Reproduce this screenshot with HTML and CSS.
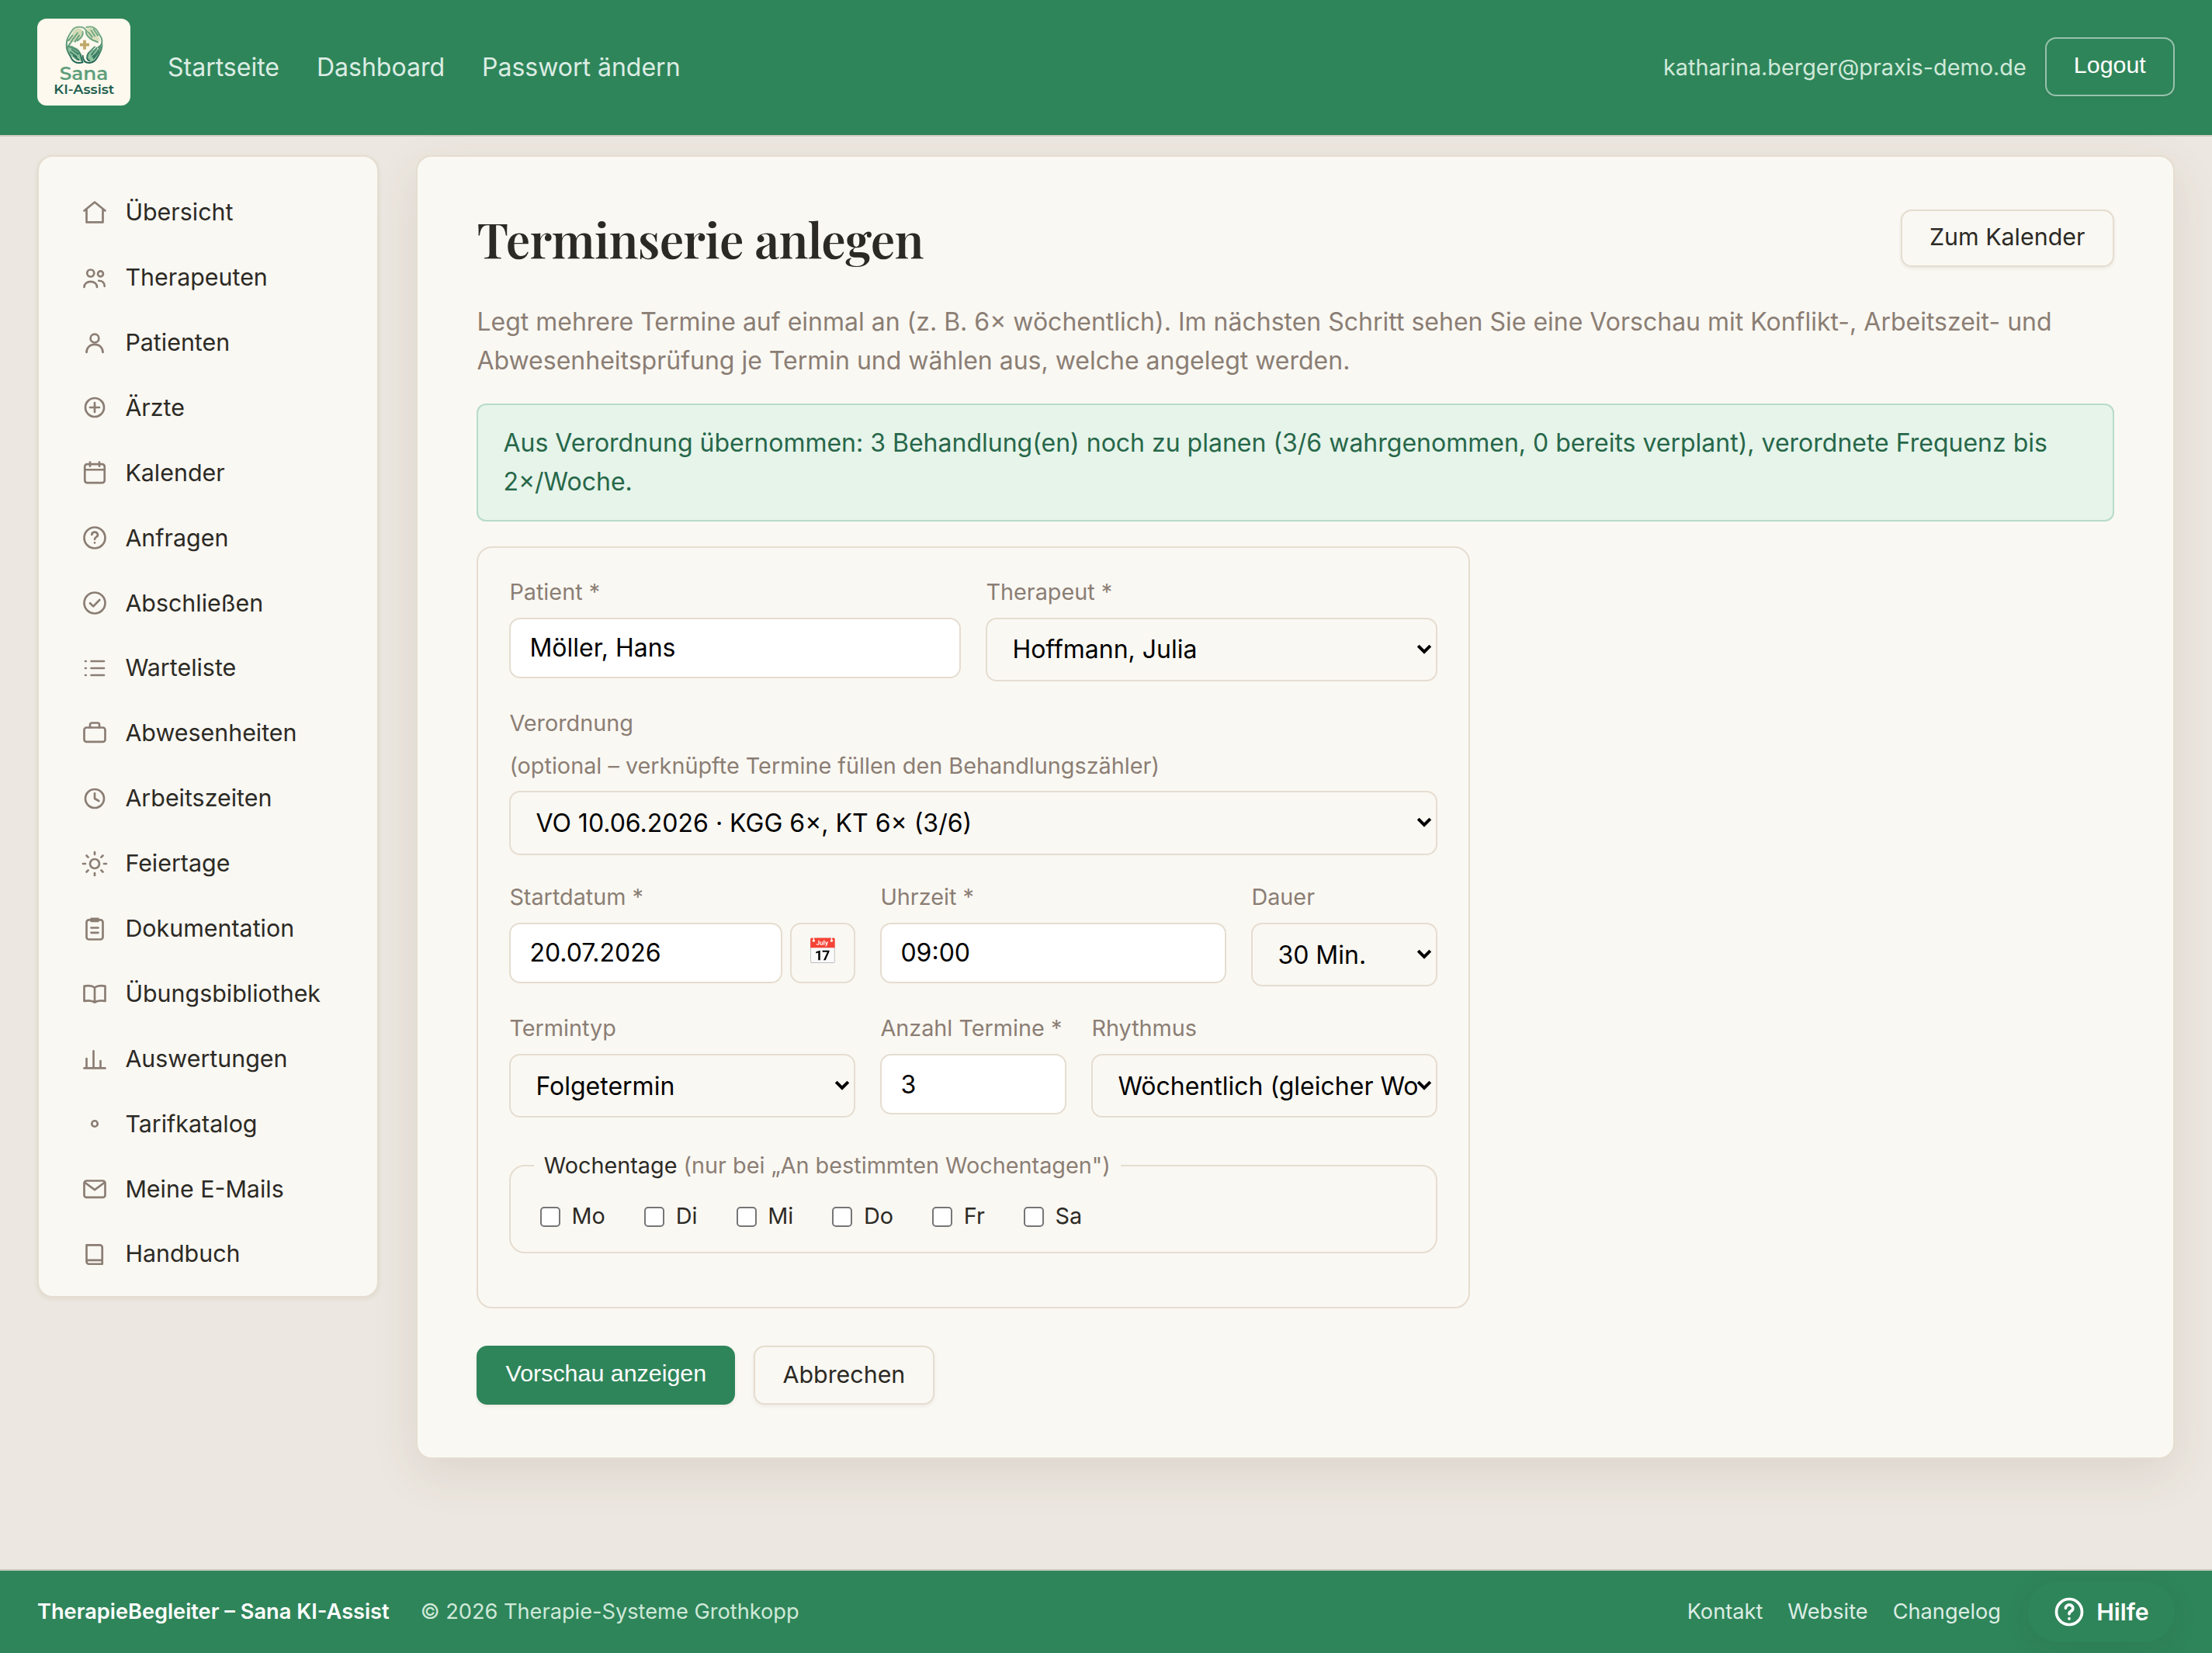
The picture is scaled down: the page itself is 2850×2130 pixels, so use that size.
FILE: index.html
```html
<!DOCTYPE html>
<html lang="de">
<head>
<meta charset="utf-8">
<title>Terminserie anlegen</title>
<link rel="stylesheet" href="styles.css">
</head>
<body>
<header class="topbar">
  <a class="brand" href="#">
    <svg class="brand-logo" viewBox="0 0 360 336" aria-label="Sana KI-Assist">
      <defs>
        <linearGradient id="ring" gradientUnits="userSpaceOnUse" x1="0" y1="0" x2="0" y2="144">
          <stop offset="0" stop-color="#7fb08a"/><stop offset=".5" stop-color="#5d9a78"/><stop offset="1" stop-color="#1d6150"/>
        </linearGradient>
      </defs>
      <g transform="translate(110 29)" stroke-linecap="round" stroke-linejoin="round">
        <path class="palm-light" d="M30 18C42 4 62 6 66 20C68 36 58 46 46 56L28 62L12 58Z"/>
        <path class="palm-pale" d="M84 8C102 2 112 12 120 28L134 56L118 60L92 46C78 34 74 18 84 8Z"/>
        <path class="palm-mint" d="M6 82C8 72 24 72 34 82C50 84 64 104 66 136L40 132L14 108Z"/>
        <path class="palm-mint" d="M138 84L130 112L104 136C90 142 82 130 84 112L104 92Z"/>
        <g class="lines" stroke="url(#ring)">
          <path d="M4 62C4 46 14 34 24 18C32 4 48 2 62 4C72 6 78 14 82 22"/>
          <path d="M80 4C96 0 112 2 122 18L138 46C144 62 138 76 126 82"/>
          <path d="M4 60C2 76 2 88 10 102L24 128C34 142 50 144 66 140"/>
          <path d="M140 66C142 84 136 96 126 114C116 132 108 142 92 142C76 142 66 132 66 114"/>
          <path d="M66 22C68 40 56 48 46 56M46 26L28 50M52 36L36 60M10 56L26 36M28 50L18 66C12 74 6 78 6 88"/>
          <path d="M78 20C78 36 90 46 104 54L124 62M88 24L102 42M98 16L112 38M108 12L124 36"/>
          <path d="M14 80C30 84 46 88 56 108M18 100L42 118M24 90L48 108M30 114L50 130M56 108L64 136"/>
          <path d="M134 80C126 96 118 110 104 118M120 84L100 110M112 80L88 104C80 116 80 130 92 134M128 98L108 124"/>
        </g>
        <path class="spark" d="M73 54V90M55 72H91"/>
      </g>
      <text class="logo-name" x="86" y="237" textLength="188" lengthAdjust="spacingAndGlyphs">Sana</text>
      <text class="logo-sub" x="64" y="291" textLength="234" lengthAdjust="spacingAndGlyphs">KI-Assist</text>
    </svg>
  </a>
  <nav class="topnav">
    <a href="#">Startseite</a>
    <a href="#">Dashboard</a>
    <a href="#">Passwort ändern</a>
  </nav>
  <div class="account">
    <span class="account-mail">katharina.berger@praxis-demo.de</span>
    <button class="btn btn-ghost" type="button">Logout</button>
  </div>
</header>

<div class="layout">
  <aside class="sidebar">
    <a href="#"><svg viewBox="0 0 24 24"><path d="M3 10.3 12 3l9 7.3M5 9v11.3h14V9"/></svg>Übersicht</a>
    <a href="#"><svg viewBox="0 0 24 24"><circle cx="8.5" cy="8" r="3"/><path d="M3 20c0-3 2.500-4.800 5.500-4.800S14 17 14 20M15.500 14.500c2.800 0 5 1.700 5 4.700"/><circle cx="17" cy="8.600" r="2.300"/></svg>Therapeuten</a>
    <a href="#"><svg viewBox="0 0 24 24"><circle cx="12" cy="8" r="3.600"/><path d="M5 20c0-4 3-6.800 7-6.800s7 2.800 7 6.800"/></svg>Patienten</a>
    <a href="#"><svg viewBox="0 0 24 24"><circle cx="12" cy="12" r="8"/><path d="M12 8v8M8 12h8"/></svg>Ärzte</a>
    <a href="#"><svg viewBox="0 0 24 24"><rect x="3.500" y="4.700" width="17" height="16" rx="2"/><path d="M3.500 9.500h17M8 3v3.500M16 3v3.500"/></svg>Kalender</a>
    <a href="#"><svg viewBox="0 0 24 24"><circle cx="12" cy="12" r="9"/><path d="M9.500 9.300a2.550 2.300 0 1 1 3.700 2.100c-.8.400-1.200 1-1.200 1.900M12 16.200v.1"/></svg>Anfragen</a>
    <a href="#"><svg viewBox="0 0 24 24"><circle cx="12" cy="12" r="9"/><path d="m8 12.200 2.800 2.700L16.200 9.300"/></svg>Abschließen</a>
    <a href="#"><svg viewBox="0 0 24 24"><path d="M9 6h11M9 12h11M9 18h11M4 6h.5M4 12h.5M4 18h.5"/></svg>Warteliste</a>
    <a href="#"><svg viewBox="0 0 24 24"><rect x="3" y="7" width="18" height="12.300" rx="2"/><path d="M8 7V4.500A1.500 1.500 0 0 1 9.500 3h5A1.500 1.500 0 0 1 16 4.500V7"/></svg>Abwesenheiten</a>
    <a href="#"><svg viewBox="0 0 24 24"><circle cx="12" cy="12" r="8"/><path d="M12 7.500V12l3.500 2"/></svg>Arbeitszeiten</a>
    <a href="#"><svg viewBox="0 0 24 24"><circle cx="12" cy="12" r="4"/><path d="M12 2v2M12 20v2M2 12h2M20 12h2M5 5l1.400 1.400M17.600 17.600 19 19M5 19l1.400-1.400M17.600 6.400 19 5"/></svg>Feiertage</a>
    <a href="#"><svg viewBox="0 0 24 24"><rect x="5" y="4.300" width="14" height="16.700" rx="2"/><path d="M9 3.300h6v1.900H9zM9 11h6M9 15.200h6"/></svg>Dokumentation</a>
    <a href="#"><svg viewBox="0 0 24 24"><path d="M12 7c-2-1.500-5-1.900-9-1.200v12.800c4-.7 7-.3 9 1.200 2-1.500 5-1.900 9-1.200V5.800C17 5.100 14 5.500 12 7v12.800"/></svg>Übungsbibliothek</a>
    <a href="#"><svg viewBox="0 0 24 24"><path d="M3 20.300h18M5 20v-8M11 20V5.500M17 20v-6"/></svg>Auswertungen</a>
    <a href="#"><svg viewBox="0 0 24 24"><circle cx="12" cy="12" r="2.500"/></svg>Tarifkatalog</a>
    <a href="#"><svg viewBox="0 0 24 24"><rect x="3" y="5" width="18" height="14.300" rx="2"/><path d="m3.500 6.500 8.500 6.300 8.500-6.300"/></svg>Meine E-Mails</a>
    <a href="#"><svg viewBox="0 0 24 24"><path d="M5 4.300h11.500a2 2 0 0 1 2 2v14.200H7a2 2 0 0 1-2-2zM5 18.500a1.400 1.400 0 0 1 1.400-1.200h12.100"/></svg>Handbuch</a>
  </aside>

  <main class="panel">
    <div class="panel-head">
      <h1>Terminserie anlegen</h1>
      <a class="btn btn-outline" href="#">Zum Kalender</a>
    </div>
    <p class="intro">Legt mehrere Termine auf einmal an (z. B. 6× wöchentlich). Im nächsten Schritt sehen Sie eine Vorschau mit Konflikt-, Arbeitszeit- und Abwesenheitsprüfung je Termin und wählen aus, welche angelegt werden.</p>
    <div class="notice">Aus Verordnung übernommen: 3 Behandlung(en) noch zu planen (3/6 wahrgenommen, 0 bereits verplant), verordnete Frequenz bis 2×/Woche.</div>

    <form>
      <div class="form-card">
        <div class="row row-half">
          <label class="field">Patient *<input type="text" value="Möller, Hans"></label>
          <label class="field">Therapeut *
            <span class="select"><select><option>Hoffmann, Julia</option></select><svg viewBox="0 0 10 7"><path d="M1.100 1.100 5 5l3.900-3.900"/></svg></span>
          </label>
        </div>
        <div class="row row-prescription">
          <label class="field">Verordnung<span>(optional – verknüpfte Termine füllen den Behandlungszähler)</span>
            <span class="select"><select><option>VO 10.06.2026 · KGG 6×, KT 6× (3/6)</option></select><svg viewBox="0 0 10 7"><path d="M1.100 1.100 5 5l3.900-3.900"/></svg></span>
          </label>
        </div>
        <div class="row row-date">
          <label class="field">Startdatum *
            <span class="date-group"><input type="text" value="20.07.2026"><button class="date-btn" type="button">📅</button></span>
          </label>
          <label class="field">Uhrzeit *<input type="text" value="09:00"></label>
          <label class="field">Dauer
            <span class="select"><select><option>30 Min.</option></select><svg viewBox="0 0 10 7"><path d="M1.100 1.100 5 5l3.900-3.900"/></svg></span>
          </label>
        </div>
        <div class="row row-type">
          <label class="field">Termintyp
            <span class="select"><select><option>Folgetermin</option></select><svg viewBox="0 0 10 7"><path d="M1.100 1.100 5 5l3.900-3.900"/></svg></span>
          </label>
          <label class="field">Anzahl Termine *<input type="text" value="3"></label>
          <label class="field">Rhythmus
            <span class="select"><select><option>Wöchentlich (gleicher Wochentag)</option></select><svg viewBox="0 0 10 7"><path d="M1.100 1.100 5 5l3.900-3.900"/></svg></span>
          </label>
        </div>
        <fieldset class="weekdays">
          <legend>Wochentage <span class="muted">(nur bei „An bestimmten Wochentagen")</span></legend>
          <div class="days">
            <label><input type="checkbox">Mo</label>
            <label><input type="checkbox">Di</label>
            <label><input type="checkbox">Mi</label>
            <label><input type="checkbox">Do</label>
            <label><input type="checkbox">Fr</label>
            <label><input type="checkbox">Sa</label>
          </div>
        </fieldset>
      </div>
      <div class="actions">
        <button class="btn btn-primary" type="button">Vorschau anzeigen</button>
        <a class="btn btn-outline" href="#">Abbrechen</a>
      </div>
    </form>
  </main>
</div>

<footer class="footer">
  <strong>TherapieBegleiter – Sana KI-Assist</strong>
  <span class="copyright">© 2026 Therapie-Systeme Grothkopp</span>
  <nav class="footer-links">
    <a href="#">Kontakt</a>
    <a href="#">Website</a>
    <a href="#">Changelog</a>
  </nav>
  <button class="help" type="button">
    <svg viewBox="0 0 24 24"><circle cx="12" cy="12" r="9"/><path d="M9.500 9.300a2.550 2.400 0 1 1 3.700 2.300c-.8.400-1.200 1-1.200 1.900M12 16.700v.1"/></svg>Hilfe
  </button>
</footer>
</body>
</html>
```

FILE: styles.css
```css
:root {
  --green: #2f855a;
  --paper: #faf8f3;
  --line: #e5ddd0;
  --ink: #2c2a25;
  --muted: #8b7e74;
}

/* The interface is laid out on a 1425px grid and shown at double size. */
html {
  zoom: 2;
}

*, *::before, *::after {
  box-sizing: border-box;
}

body {
  margin: 0;
  width: 1425px;
  height: 1065px;
  display: flex;
  flex-direction: column;
  overflow: hidden;
  background: #ece7e0;
  color: var(--ink);
  font: 16px/1.55 Inter, "Liberation Sans", sans-serif;
}

a {
  color: inherit;
  text-decoration: none;
}

svg {
  fill: none;
  stroke: currentColor;
  stroke-linecap: round;
  stroke-linejoin: round;
}

/* Top bar */
.topbar {
  display: flex;
  align-items: center;
  height: 88px;
  padding: 12px 24px;
  background: var(--green);
  border-bottom: 1px solid #d5ccc6;
}

.brand {
  align-self: flex-start;
  height: 56px;
}

.brand-logo {
  display: block;
  width: 60px;
  height: 56px;
  border-radius: 6px;
  background: #fdf9ee;
  stroke: none;
}

.palm-light { fill: #d3dab6; }
.palm-pale { fill: #d9dfbc; }
.palm-mint { fill: #8fc3a0; }
.lines { fill: none; stroke-width: 6; }
.spark { stroke: #bfa86a; stroke-width: 11; stroke-linecap: butt; }

.logo-name {
  font: 600 72px Montserrat, Inter, sans-serif;
  fill: #5f9f7c;
}

.logo-sub {
  font: 600 52px Montserrat, Inter, sans-serif;
  fill: #1f5f50;
}

.topnav {
  display: flex;
  gap: 24px;
  margin-left: 24px;
  color: #dcede4;
}

.account {
  display: flex;
  align-items: center;
  gap: 12px;
  margin-left: auto;
}

.account-mail {
  font-size: 14.400px;
  color: #cfe9d9;
}

/* Buttons */
.btn {
  display: inline-flex;
  align-items: center;
  height: 38px;
  padding: 0 17.600px;
  border: 1px solid var(--line);
  border-radius: 7px;
  font-size: 15.200px;
  line-height: normal;
  box-shadow: 0 1px 2px rgba(60, 45, 20, .08);
}

button.btn {
  padding-bottom: 2px;
  font-family: "Liberation Sans", Arial, sans-serif;
  color: #fff;
}

button.btn-ghost {
  margin-bottom: 1px;
  padding-bottom: 3px;
  background: transparent;
  border-color: rgba(255, 255, 255, .5);
}

.btn-primary {
  background: var(--green);
  border-color: var(--green);
}

.btn-outline {
  background: var(--paper);
}

.actions .btn-outline {
  padding-bottom: 1px;
}

/* Layout */
.layout {
  display: flex;
  align-items: flex-start;
  gap: 24px;
  padding: 12px 24px 0;
}

.sidebar {
  width: 220px;
  height: 736px;
  padding: 14.900px 27px 0;
  background: var(--paper);
  border: 1px solid var(--line);
  border-radius: 10px;
  box-shadow: 0 1px 3px rgba(80, 60, 20, .08);
}

.sidebar a {
  display: flex;
  align-items: center;
  gap: 10.700px;
  height: 41.950px;
  font-size: 15.200px;
}

.sidebar svg {
  width: 18px;
  height: 18px;
  stroke: var(--muted);
  stroke-width: 1.800;
}

.panel {
  flex: 1;
  height: 840px;
  padding: 34px 38.200px;
  background: var(--paper);
  border: 1px solid var(--line);
  border-radius: 10px;
  box-shadow: 0 10px 30px rgba(80, 60, 40, .1);
}

.panel-head {
  display: flex;
  justify-content: space-between;
  align-items: flex-start;
  height: 60.100px;
}

.panel-head .btn {
  height: 37px;
  padding-bottom: 2px;
}

h1 {
  margin: 0;
  font: 600 31.200px/37px "Playfair Display", "Liberation Serif", serif;
  letter-spacing: -.312px;
}

.intro {
  margin: 0;
  color: var(--muted);
}

.notice {
  margin: 15.100px 0 16px;
  padding: 12.300px 16px;
  height: 76px;
  background: #e6f4ea;
  border: 1px solid #b7dcc8;
  border-radius: 6px;
  color: #276749;
}

/* Form */
.form-card {
  width: 640px;
  height: 491px;
  padding: 17.900px 20px;
  border: 1px solid var(--line);
  border-radius: 10px;
}

.row {
  display: grid;
  gap: 16px;
  margin-bottom: 16px;
  align-items: start;
}

.row-half { grid-template-columns: 1fr 1fr; }
.row-prescription { margin-bottom: 16.400px; }
.row-date { grid-template-columns: 1fr 1fr 120px; }
.row-type { grid-template-columns: 1fr 120px 1fr; }

.field {
  display: flex;
  flex-direction: column;
  gap: 4.800px;
  min-width: 0;
  font-size: 14.400px;
  color: var(--muted);
}

.field input,
.field select {
  width: 100%;
  min-width: 0;
  border: 1px solid var(--line);
  border-radius: 7px;
  font: 16px Inter, sans-serif;
  color: #000;
}

.field input {
  height: 39.360px;
  padding: 0 12px;
  background: #fff;
}

.field select {
  display: block;
  height: 41.400px;
  padding: 0 12px 0 16px;
  appearance: none;
  background: var(--paper);
}

.select {
  position: relative;
}

.select svg {
  position: absolute;
  top: 50%;
  right: 3.900px;
  width: 10px;
  height: 7px;
  margin-top: -3.500px;
  stroke: #000;
  stroke-width: 2;
  stroke-linecap: butt;
  stroke-linejoin: miter;
}

.date-group {
  display: flex;
  gap: 5px;
}

.date-btn {
  flex: none;
  width: 42px;
  padding: 0 0 2px;
  border: 1px solid var(--line);
  border-radius: 7px;
  background: var(--paper);
  font-size: 16px;
}

.weekdays {
  height: 67.500px;
  margin: 19.700px 0 0;
  padding: 0 14.800px;
  border: 1px solid var(--line);
  border-radius: 10px;
  font-size: 14.400px;
}

.weekdays legend {
  padding: 0 6.400px;
}

.muted {
  color: var(--muted);
}

.days {
  display: flex;
  gap: 21.100px;
  padding-top: 10.400px;
}

.days label {
  display: flex;
  align-items: center;
}

.days input {
  margin: 3px 7.300px 3px 4px;
}

.actions {
  display: flex;
  gap: 12px;
  margin-top: 24px;
}

/* Footer */
.footer {
  position: relative;
  display: flex;
  align-items: center;
  height: 54px;
  margin-top: auto;
  padding: 0 136px 0 24px;
  background: var(--green);
  border-top: 1px solid #cac8bf;
  font-size: 13.600px;
  color: #dcede4;
}

.footer strong {
  font-weight: 600;
  color: #fff;
}

.copyright {
  margin-left: 20px;
  color: #cfe9d9;
}

.footer-links {
  display: flex;
  gap: 16px;
  margin-left: auto;
}

.help {
  position: absolute;
  right: 24px;
  bottom: 7px;
  display: flex;
  align-items: center;
  gap: 6.400px;
  height: 39px;
  padding: 0 16.600px 0 16px;
  border: 0;
  border-radius: 20px;
  background: var(--green);
  box-shadow: 0 4px 16px rgba(44, 42, 37, .1);
  color: #fff;
  font: 600 15.200px Inter, sans-serif;
}

.help svg {
  width: 22px;
  height: 22px;
  stroke-width: 2;
}
```
